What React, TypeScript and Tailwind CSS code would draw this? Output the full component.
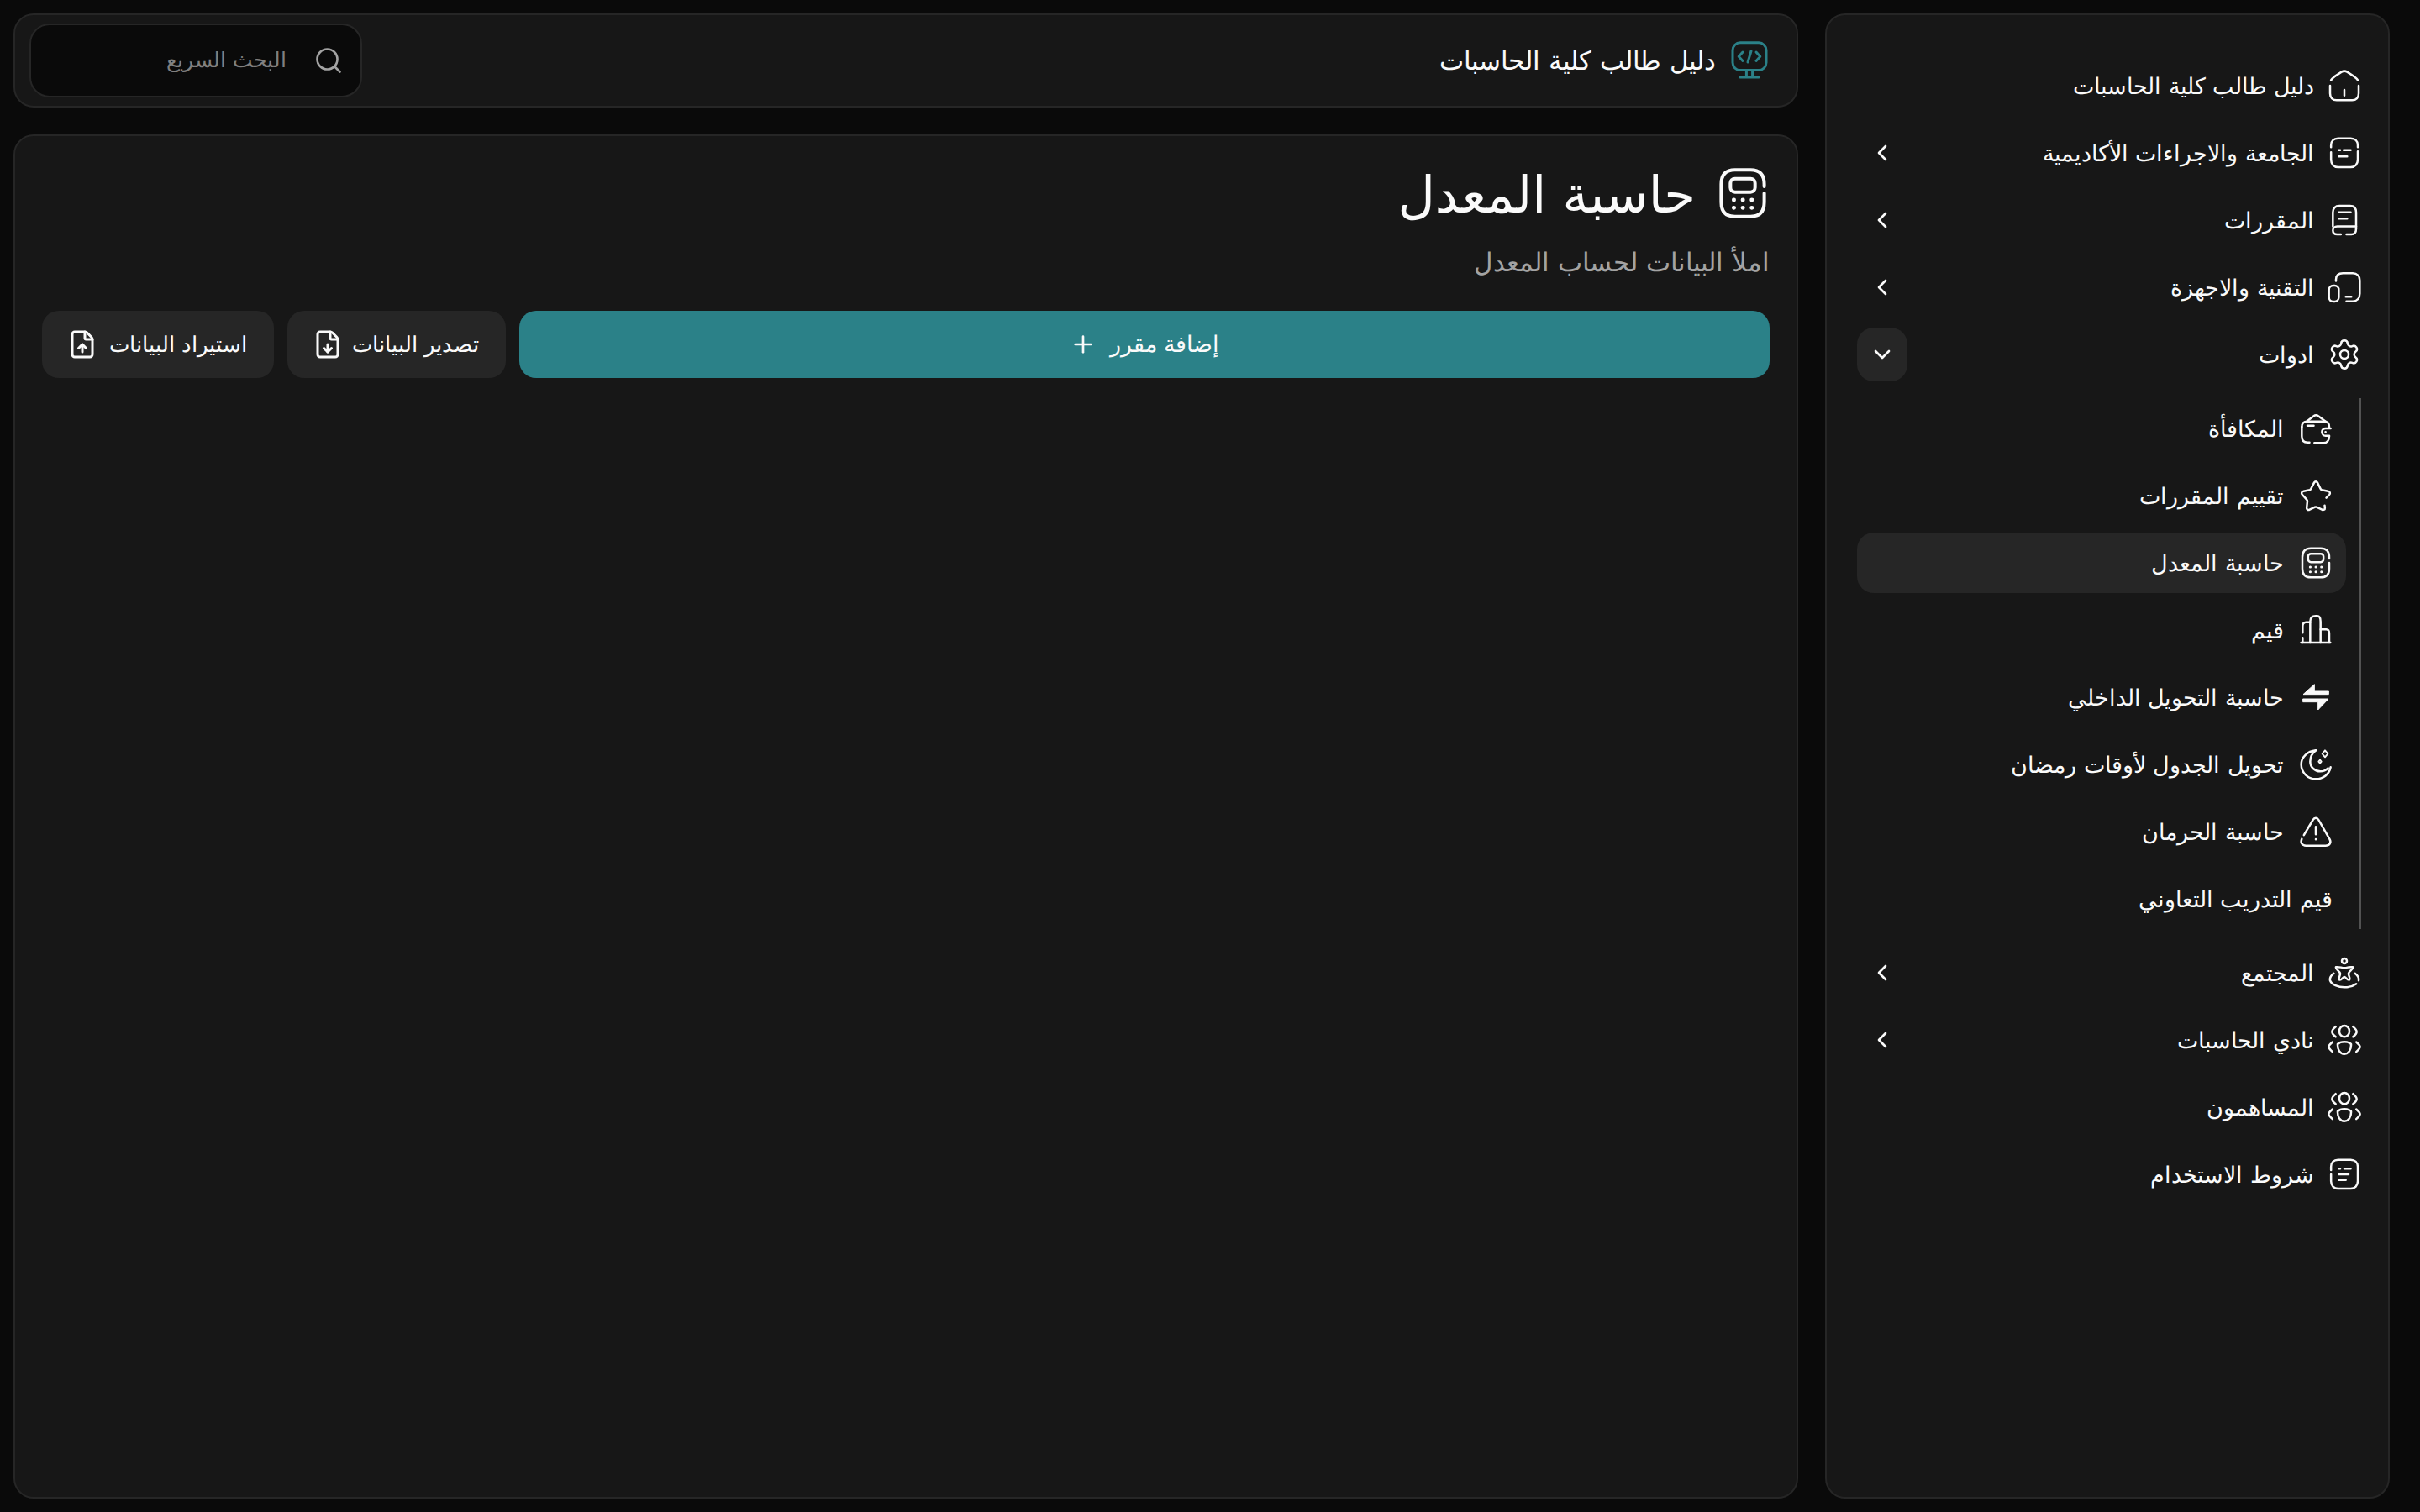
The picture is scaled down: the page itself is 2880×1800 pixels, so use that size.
import { ChevronDown, ChevronLeft, FileDown, FileUp, Plus, Search, Settings } from "lucide-react";
import type { ReactNode } from "react";

const Ic = ({ children, size = "h-10 w-10" }: { children: ReactNode; size?: string }) => (
  <svg
    viewBox="0 0 24 24"
    fill="none"
    stroke="currentColor"
    strokeWidth={1.5}
    strokeLinecap="round"
    strokeLinejoin="round"
    className={`${size} shrink-0`}
  >
    {children}
  </svg>
);

const HomeIcon = () => (
  <Ic>
    <path d="M2.5 8C3 7 4 6.3 5 5.5L10 2.2C11.3 1.4 12.7 1.4 14 2.2L19 5.5C20 6.3 21 7 21.6 8" />
    <path d="M1.8 12V17.5C1.8 20.5 3.5 22.4 6.5 22.4H17.5C20.5 22.4 22.2 20.5 22.2 17.5V12" />
    <path d="M12 15V19" />
  </Ic>
);

const UniIcon = () => (
  <Ic>
    <path d="M2.5 8V6.5C2.5 3.5 4.5 1.6 7.5 1.6H16.5C19.5 1.6 21.6 3.5 21.6 6.5V8" />
    <path d="M21.6 11V17C21.6 20 19.5 22.2 16.5 22.2H7.5C4.5 22.2 2.5 20 2.5 17V11.5" />
    <path d="M8 10H9M11.5 10H16.5M8 14.5H14" />
  </Ic>
);

const BookIcon = () => (
  <Ic>
    <path d="M3.8 16.5V6.5C3.8 3.5 5.5 1.8 8.5 1.8H16C19 1.8 20.4 3.5 20.4 6.5V18" />
    <path d="M20.4 16.5H7C5 16.5 3.8 17.8 3.8 19.3C3.8 21.2 5.2 22.2 7 22.2H9.5" />
    <path d="M13.5 22.2H17C19.2 22.2 20.4 21 20.4 18" />
    <path d="M8 6.5H16.5M8 11H14" />
  </Ic>
);

const DevicesIcon = () => (
  <Ic>
    <path d="M6 7.5V6.5C6 3.5 8 2 11 2H18C21 2 23 4 23 7V16.5C23 20 21 22 18 22H13.5" />
    <rect x="1" y="10.8" width="7" height="11.4" rx="3" />
    <path d="M13 18.8H17" />
  </Ic>
);

const WalletIcon = () => (
  <Ic>
    <path d="M5.5 7L10.5 3.2C11.5 2.4 12.8 2.4 13.8 3.2L19 7" />
    <path d="M2 11C2 8 3.5 7 6 7H18C20.5 7 21.6 8.5 21.6 11" />
    <path d="M2 11V17.5C2 20.5 3.5 22 6 22H7.5" />
    <path d="M11 22.4H17.5C20 22.4 21.6 20.5 21.6 17.5" />
    <path d="M22.6 12H19C17.5 12 16.4 13.1 16.4 14.5C16.4 16 17.5 17.3 19 17.3H21.6" />
    <path d="M6 10H10.5M18.9 14.6H19" />
  </Ic>
);

const StarIcon = () => (
  <Ic>
    <path d="M18.3 19L18.5 20.7C18.6 22 17.5 22.6 16.4 22L12.6 20.2C12.2 20 11.8 20 11.4 20.2L7.6 22C6.4 22.6 5.3 21.8 5.5 20.6L6 16C6 15.6 5.9 15.2 5.6 14.9L2.4 11.4C1.4 10.3 1.8 9.1 3.3 8.8L7.6 7.9C8 7.8 8.3 7.6 8.5 7.2L10.8 2.8C11.4 1.6 12.6 1.6 13.2 2.8L15.4 7.2C15.6 7.6 15.9 7.8 16.3 7.9L20.7 8.8C22.2 9.1 22.6 10.3 21.6 11.4L19.5 13.6" />
  </Ic>
);

const CalcIcon = ({ size }: { size?: string }) => (
  <Ic size={size}>
    <path d="M21.6 9V8C21.6 3.5 19.5 1.6 15.5 1.6H8.5C4.5 1.6 2.4 3.5 2.4 8V16C2.4 20.5 4.5 22.4 8.5 22.4H15.5C19.5 22.4 21.6 20.5 21.6 16V12" />
    <rect x="6.5" y="5.5" width="11" height="6" rx="2" />
    <path d="M8 15H8.1M12 15H12.1M16 15H16.1M8 18.5H8.1M12 18.5H12.1M16 18.5H16.1" strokeWidth={1.8} />
  </Ic>
);

const ChartIcon = () => (
  <Ic>
    <path d="M1.5 21H22.4" />
    <path d="M8 21V6C8 3.5 9 2 12 2H13C14.5 2 15.4 3.5 15.4 6V21" />
    <path d="M15.4 11.5H19.5C21 11.5 21.6 12.5 21.6 14.5V21" />
    <path d="M8 6.5H5C3.5 6.5 2.6 7.5 2.6 9.5V14M2.6 17.5V21" />
  </Ic>
);

const SwapIcon = () => (
  <Ic>
    <path d="M21 10H3L11 2.8V7.8H21Z" fill="currentColor" strokeWidth={0.6} />
    <path d="M3 13.2H21L13.6 21V15.4H3Z" fill="currentColor" strokeWidth={0.6} />
  </Ic>
);

const MoonIcon = () => (
  <Ic>
    <path d="M12 2C6 2.6 1.6 6.8 1.6 12C1.6 17.8 6.3 22.4 12 22.4C17.5 22.4 21.6 19 22.6 14" />
    <path d="M12 2C9.5 4 8 7 8 10C8 14 11.4 17 15.2 17C17.6 17 19.4 16 20.8 14.6" />
    <path d="M18.6 2L20.6 4.4L18.6 6.8L16.6 4.4Z" strokeWidth={1.1} />
    <path d="M15 8.8L16 10L15 11.2L14 10Z" strokeWidth={1.1} />
  </Ic>
);

const AlertIcon = () => (
  <Ic>
    <path d="M3.5 14.5L10 3.6C11 1.8 13 1.8 14 3.6L22 17.6C23.2 20 21.8 22 19 22H5C2.2 22 0.8 20 2 17.2" />
    <path d="M12 8.5V14M12 17.4V17.6" />
  </Ic>
);

const CommunityIcon = () => (
  <Ic>
    <circle cx="12" cy="3.6" r="1.8" />
    <path d="M6 8C8 7.5 10 8.5 12 8.5C14 8.5 16 7.5 18 8C18.6 9.5 15.5 10.6 15 12.5C14.8 14 16.5 16 15.6 17C14.2 17.6 13 15 12 15C11 15 9.8 17.6 8.4 17C7.5 16 9.2 14 9 12.5C8.5 10.6 5.4 9.5 6 8Z" />
    <path d="M4.4 12.5C2.5 14 1.4 15.5 1.8 17.5C3 20.5 7.5 22.4 12 22.4C15.5 22.4 18.5 21.5 20.5 20" />
    <path d="M19.6 12.5C21.5 14 22.6 15.5 22.2 17.5" />
  </Ic>
);

const UsersIcon = () => (
  <Ic>
    <ellipse cx="12" cy="5.8" rx="3.6" ry="4" />
    <path d="M5.8 2.5C4.2 3.8 3.2 5 3.2 6.2C3.2 7.4 4.2 8.6 5.8 9.8" />
    <path d="M18.2 2.5C19.8 3.8 20.8 5 20.8 6.2C20.8 7.4 19.8 8.6 18.2 9.8" />
    <path d="M7.2 15C7 19 9 22 12 22C15 22 17 19 16.8 15C15.8 14 14 13.4 12 13.4C10 13.4 8.2 14 7.2 15" />
    <path d="M3.5 13.5C1.8 15 0.8 16 0.8 17C0.8 18 1.8 19 3.5 20.5" />
    <path d="M20.5 13.5C22.2 15 23.2 16 23.2 17C23.2 18 22.2 19 20.5 20.5" />
  </Ic>
);

const TermsIcon = () => (
  <Ic>
    <path d="M2.5 9V6.5C2.5 3.5 4.5 1.6 7.5 1.6H16.5C19.5 1.6 21.6 3.5 21.6 6.5V17C21.6 20 19.5 22.2 16.5 22.2H7.5C4.5 22.2 2.5 20 2.5 17V12" />
    <path d="M8 8H9M12 8H16.5M8 12H15M8 16H13" />
  </Ic>
);

const MonitorCodeIcon = () => (
  <svg viewBox="0 0 24 24" fill="none" stroke="currentColor" strokeWidth={1.5} strokeLinecap="round" strokeLinejoin="round" className="h-12 w-12 shrink-0 text-[#2b8188]">
    <rect x="2" y="1.4" width="20" height="16.4" rx="4.5" />
    <path d="M10.2 17.8V22M13.8 17.8V22M6.5 22H17.5" />
    <path d="M8 7L5.6 9.6L8 12.2M16 7L18.4 9.6L16 12.2M13 6.4L11 13" />
  </svg>
);

const topItems = [
  { label: "دليل طالب كلية الحاسبات", icon: <HomeIcon /> },
  { label: "الجامعة والاجراءات الأكاديمية", icon: <UniIcon />, arrow: true },
  { label: "المقررات", icon: <BookIcon />, arrow: true },
  { label: "التقنية والاجهزة", icon: <DevicesIcon />, arrow: true },
];

const toolItems = [
  { label: "المكافأة", icon: <WalletIcon /> },
  { label: "تقييم المقررات", icon: <StarIcon /> },
  { label: "حاسبة المعدل", icon: <CalcIcon />, active: true },
  { label: "قيم", icon: <ChartIcon /> },
  { label: "حاسبة التحويل الداخلي", icon: <SwapIcon /> },
  { label: "تحويل الجدول لأوقات رمضان", icon: <MoonIcon /> },
  { label: "حاسبة الحرمان", icon: <AlertIcon /> },
  { label: "قيم التدريب التعاوني" },
];

const bottomItems = [
  { label: "المجتمع", icon: <CommunityIcon />, arrow: true },
  { label: "نادي الحاسبات", icon: <UsersIcon />, arrow: true },
  { label: "المساهمون", icon: <UsersIcon /> },
  { label: "شروط الاستخدام", icon: <TermsIcon /> },
];

type NavItem = { label: string; icon?: ReactNode; arrow?: boolean };

const NavRow = ({ item }: { item: NavItem }) => (
  <div className="flex h-[72px] items-center gap-4 pr-4">
    {item.icon}
    <span className="pt-[2px] text-[27px] font-light whitespace-nowrap text-[#fafafa]">{item.label}</span>
    {item.arrow && (
      <span className="mr-auto flex h-16 w-[60px] items-center justify-center text-[#fafafa]">
        <ChevronLeft className="h-8 w-8" strokeWidth={2} />
      </span>
    )}
  </div>
);

const Sidebar = () => (
  <aside className="flex w-[672px] shrink-0 flex-col gap-2 rounded-[24px] border-2 border-[#262626] bg-[#171717] pt-12 pr-4 pl-9">
    {topItems.map((item) => (
      <NavRow key={item.label} item={item} />
    ))}
    <div className="flex h-[72px] items-center gap-4 pr-4">
      <Settings className="h-10 w-10 shrink-0 text-[#fafafa]" strokeWidth={1.5} />
      <span className="pt-[2px] text-[27px] font-light text-[#fafafa]">ادوات</span>
      <span className="mr-auto flex h-16 w-[60px] items-center justify-center rounded-[20px] bg-[#262626] text-[#fafafa]">
        <ChevronDown className="h-8 w-8" strokeWidth={2} />
      </span>
    </div>
    <div className="my-2 mr-4 flex flex-col gap-2 border-r-2 border-[#525252] pr-4">
      {toolItems.map((item) => (
        <div
          key={item.label}
          className={`flex h-[72px] items-center gap-[18px] rounded-[20px] px-4 ${item.active ? "bg-[#262626]" : ""}`}
        >
          {item.icon}
          <span className="pt-[2px] text-[27px] font-light whitespace-nowrap text-[#fafafa]">{item.label}</span>
        </div>
      ))}
    </div>
    {bottomItems.map((item) => (
      <NavRow key={item.label} item={item} />
    ))}
  </aside>
);

export default function App() {
  return (
    <div
      dir="rtl"
      className="flex h-screen gap-8 bg-[#0a0a0a] py-4 pr-9 pl-4 font-['DejaVu_Sans',sans-serif] text-[#fafafa]"
    >
      <Sidebar />
      <div className="flex min-w-0 flex-1 flex-col gap-8">
        <header className="flex h-[112px] shrink-0 items-center justify-between rounded-[24px] border-2 border-[#262626] bg-[#171717] pr-8 pl-[17px]">
          <div className="flex items-center gap-4">
            <MonitorCodeIcon />
            <span className="text-[31px] font-light whitespace-nowrap">دليل طالب كلية الحاسبات</span>
          </div>
          <div className="flex h-[88px] w-[396px] items-center gap-8 rounded-[24px] border-2 border-[#262626] bg-[#0a0a0a] px-5">
            <Search className="h-9 w-9 shrink-0 text-[#a3a3a3]" strokeWidth={1.75} />
            <span className="text-[25px] font-light whitespace-nowrap text-[#808080]">البحث السريع</span>
          </div>
        </header>

        <main className="flex-1 rounded-[24px] border-2 border-[#262626] bg-[#171717] p-8">
          <div className="flex h-[72px] items-center gap-6">
            <CalcIcon size="h-16 w-16" />
            <h1 className="pt-1 text-[61px] font-normal whitespace-nowrap">حاسبة المعدل</h1>
          </div>
          <p className="mt-[22px] h-12 text-[31px] leading-[48px] font-light text-[#a3a3a3]">املأ البيانات لحساب المعدل</p>
          <div className="mt-[34px] flex h-20 gap-4">
            <button className="flex flex-1 items-center justify-center gap-4 rounded-[20px] bg-[#2b8188] text-[27px] font-light">
              <span>إضافة مقرر</span>
              <Plus className="h-8 w-8" strokeWidth={2} />
            </button>
            <button className="flex w-[260px] items-center justify-between rounded-[20px] bg-[#262626] pr-8 pl-[30px] text-[26px] font-light whitespace-nowrap">
              <span>تصدير البيانات</span>
              <FileDown className="h-9 w-9 shrink-0" strokeWidth={2} />
            </button>
            <button className="flex w-[276px] items-center justify-between rounded-[20px] bg-[#262626] pr-8 pl-[30px] text-[26px] font-light whitespace-nowrap">
              <span>استيراد البيانات</span>
              <FileUp className="h-9 w-9 shrink-0" strokeWidth={2} />
            </button>
          </div>
        </main>
      </div>
    </div>
  );
}
